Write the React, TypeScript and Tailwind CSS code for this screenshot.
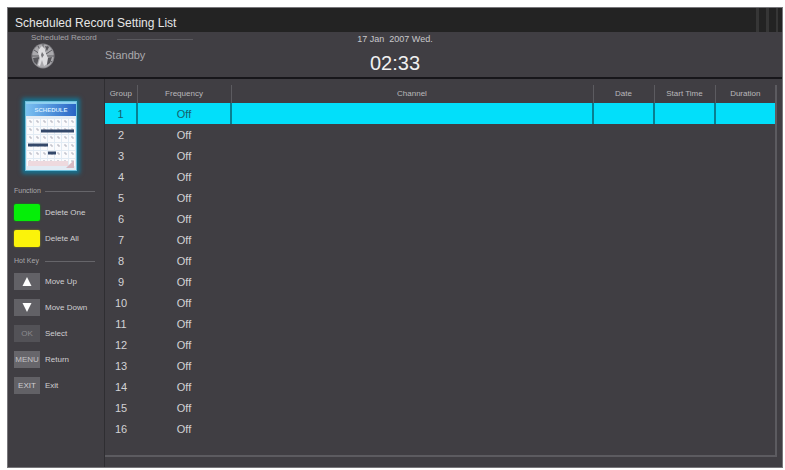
import React from 'react';

const groups = Array.from({ length: 16 }, (_, i) => ({ id: i + 1, frequency: 'Off' }));

const columns = [
  { name: 'Group', width: 'w-8' },
  { name: 'Frequency', width: 'w-[94px]' },
  { name: 'Channel', width: '' },
  { name: 'Date', width: 'w-[61px]' },
  { name: 'Start Time', width: 'w-[61px]' },
  { name: 'Duration', width: 'w-[60px]' },
];

function RecordLogo() {
  return (
    <svg viewBox="0 0 24 26" className="h-[26px] w-6" aria-hidden="true">
      <ellipse cx="12" cy="13" rx="11.5" ry="12.5" fill="#86858a" />
      <ellipse cx="12" cy="13" rx="10.5" ry="11.5" fill="#aaa9ad" />
      <g stroke="#5f5e63" strokeWidth="1">
        <path d="M12 1v7M7 3l3 6M17 3l-3 6M3 7l6 4M21 7l-6 4M1 13h7M23 13h-7M3 19l5-4M21 19l-5-4" />
      </g>
      <path d="M2 15l6-1-2 8-3-3zM16 15l5-1-2 6-3 2zM14 3l4 1-2 4z" fill="#57565b" />
      <path d="M8 6l3-3 3 3 1 5 2 4-1 6-3 2-2-6-2 6-2-1 2-7-2-5z" fill="#dddcdf" />
      <path d="M11 9l2 3-2 3-1-3z" fill="#77767b" />
    </svg>
  );
}

function ScheduleIcon() {
  return (
    <svg viewBox="0 0 52 70" className="h-[70px] w-[52px] shadow-[0_0_4px_3px_#17718f]" role="img" aria-label="Schedule">
      <defs>
        <linearGradient id="cap" x1="0" x2="1" y1="0" y2="0">
          <stop offset="0" stopColor="#7cc3f2" />
          <stop offset="1" stopColor="#2762c4" />
        </linearGradient>
      </defs>
      <rect width="52" height="70" fill="#e2ebf4" />
      <rect width="52" height="15" fill="url(#cap)" />
      <rect y="1" width="52" height="2" fill="#8fd0f0" />
      <text x="26" y="11" textAnchor="middle" fontSize="6" fontWeight="700" fill="#d3ebff" fontFamily="Liberation Sans, sans-serif">SCHEDULE</text>
      {[18, 26, 34, 42, 50, 58].map((y) =>
        [2, 9, 16, 23, 30, 37, 44].map((x) => (
          <g key={`${x}-${y}`}>
            <rect x={x} y={y} width="6" height="7" fill="#fbfbfd" />
            <path d={`M${x + 2} ${y + 2}h2v2`} fill="none" stroke="#b3b3be" strokeWidth="1" />
          </g>
        ))
      )}
      <rect x="3" y="60" width="40" height="5" fill="#eed9de" />
      <path d="M16 30h33M3 44h20M23 52h8" stroke="#34486a" strokeWidth="3" />
      <path d="M41 67l8-8v8z" fill="#d8b9c2" />
      <rect x="0.5" y="0.5" width="51" height="69" fill="none" stroke="#6cc0dd" />
    </svg>
  );
}

function SectionLabel({ children }: { children: React.ReactNode }) {
  return (
    <div className="flex h-[10px] items-center text-[7px] leading-[10px] text-[#a9a8ab]">
      <h2 className="w-[31px] whitespace-nowrap">{children}</h2>
      <span className="h-px w-[50px] bg-[#66656a]" />
    </div>
  );
}

const keyStyle = 'flex h-[17px] w-[26px] shrink-0 items-center justify-center overflow-hidden';

function KeyButton({ label, className, children }: { label: string; className: string; children?: React.ReactNode }) {
  return (
    <button type="button" className="flex h-[17px] items-center gap-[5px] whitespace-nowrap text-[8px] leading-[10px] text-[#d0cfd2]">
      <span className={`${keyStyle} ${className}`}>{children}</span>
      {label}
    </button>
  );
}

export default function App() {
  return (
    <div className="flex min-h-screen bg-white pb-[2px] pl-[7px] pr-[2px] pt-[7px] font-['Liberation_Sans',Arial,sans-serif]">
      <main className="flex flex-1 flex-col border border-[#77767a] bg-[#403e43]">
        <header>
          <div className="flex h-6 items-stretch justify-between bg-[#232323] pl-[7px]">
            <h1 className="text-[12px] leading-[30px] text-[#e6e6e6]">Scheduled Record Setting List</h1>
            <div className="flex gap-[7px] pr-1">
              <span className="w-[3px] bg-[#363636]" />
              <span className="w-[3px] bg-[#363636]" />
              <span className="w-[2px] bg-[#363636]" />
            </div>
          </div>
          <div className="grid h-[47px] grid-cols-3 border-b-2 border-[#17161a]">
            <div className="flex">
              <div className="flex w-[97px] flex-col pl-[23px]">
                <span className="whitespace-nowrap text-[8px] leading-[11px] text-[#a5a4a8]">Scheduled Record</span>
                <RecordLogo />
              </div>
              <div className="pt-[7px]">
                <div className="ml-3 h-px w-[76px] bg-[#5a595e]" />
                <p className="pt-2 text-[11px] leading-[14px] text-[#aaa9ad]">Standby</p>
              </div>
            </div>
            <div className="flex flex-col items-center">
              <p className="text-[9px] leading-[14px] text-[#c9c8cb]">17 Jan&nbsp; 2007 Wed.</p>
              <time className="text-[20px] leading-[34px] text-[#f0f0f0]">02:33</time>
            </div>
          </div>
        </header>

        <div className="flex flex-1">
          <aside className="w-[97px] shrink-0 border-r border-[#2f2e32] pl-1.5 pt-[22px]">
            <div className="flex pl-[11px]">
              <ScheduleIcon />
            </div>
            <div className="mt-[15px]">
              <SectionLabel>Function</SectionLabel>
              <div className="mt-2 flex flex-col gap-[9px]">
                <KeyButton label="Delete One" className="rounded-xs bg-[#05ee08] shadow-[0_0_2px_#05a008]" />
                <KeyButton label="Delete All" className="rounded-xs bg-[#fbf30a] shadow-[0_0_2px_#a09a08]" />
              </div>
            </div>
            <div className="mt-[9px]">
              <SectionLabel>Hot Key</SectionLabel>
              <div className="mt-[7px] flex flex-col gap-[9px]">
                <KeyButton label="Move Up" className="bg-[#626166]">
                  <svg viewBox="0 0 10 9" className="h-[9px] w-[10px]"><path d="M5 0l4.5 9h-9z" fill="#fff" /></svg>
                </KeyButton>
                <KeyButton label="Move Down" className="bg-[#626166]">
                  <svg viewBox="0 0 10 9" className="h-[9px] w-[10px]"><path d="M5 9L.5 0h9z" fill="#fff" /></svg>
                </KeyButton>
                <KeyButton label="Select" className="bg-[#535257] text-[8px] text-[#8b8a8e]">OK</KeyButton>
                <KeyButton label="Return" className="bg-[#67666b] text-[8px] text-[#c4c3c6]">MENU</KeyButton>
                <KeyButton label="Exit" className="bg-[#626166] text-[8px] text-[#d0cfd2]">EXIT</KeyButton>
              </div>
            </div>
          </aside>

          <section className="flex flex-1 flex-col pb-[10px] pr-[5px] pt-[6px]">
            <div className="flex-1 border-b-2 border-r-2 border-[#5c5b60]">
              <table className="w-full table-fixed border-collapse text-center">
                <thead>
                  <tr className="h-[18px] text-[8px] leading-[10px] text-[#b9b8bb]">
                    {columns.map((col, i) => (
                      <th key={col.name} scope="col" className={`${col.width} p-0 font-normal ${i > 0 ? 'border-l border-[#5c5b60]' : ''}`}>
                        {col.name}
                      </th>
                    ))}
                  </tr>
                </thead>
                <tbody>
                  {groups.map((group) => {
                    const selected = group.id === 1;
                    const cell = selected ? 'border-l-2 border-[#087f91] p-0 first:border-l-0' : 'p-0';
                    return (
                      <tr key={group.id} aria-selected={selected} className={`h-[21px] text-[11px] leading-[14px] ${selected ? 'bg-[#02dffa] text-[#17606c]' : 'text-[#d3d2d5]'}`}>
                        <td className={cell}>{group.id}</td>
                        <td className={cell}>{group.frequency}</td>
                        <td className={cell} />
                        <td className={cell} />
                        <td className={cell} />
                        <td className={cell} />
                      </tr>
                    );
                  })}
                </tbody>
              </table>
            </div>
          </section>
        </div>
      </main>
    </div>
  );
}
